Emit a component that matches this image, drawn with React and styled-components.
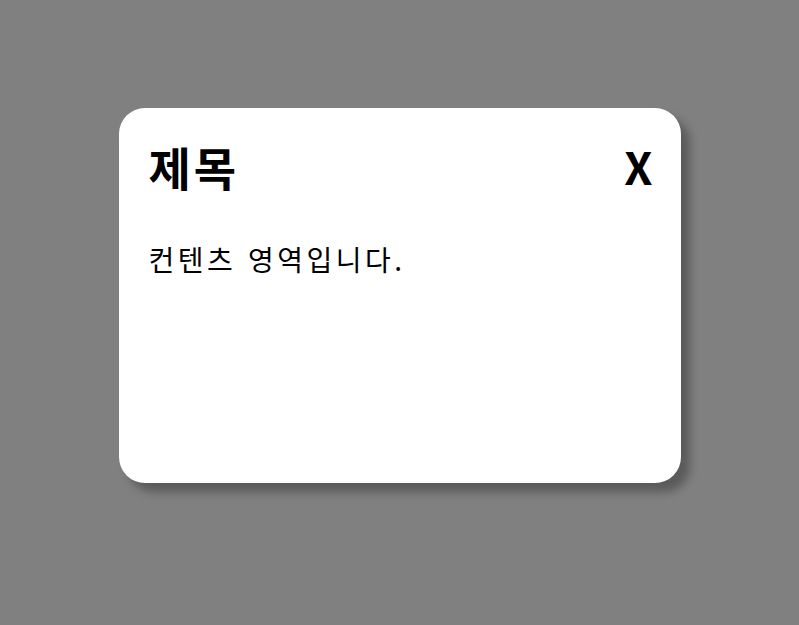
import React from "react";
import styled, {createGlobalStyle} from "styled-components";

const GlobalStyle = createGlobalStyle`
    html, body {
        margin: 0;
        padding: 0;
        width: 100%;
        height: 100%;
        background-color: #808080;
        font-family: "Noto Sans CJK KR", "Noto Sans", sans-serif;
    }
    #root {
        height: 100%;
    }
`;

const Overlay = styled.div`
    width: 100%;
    height: 100%;
    display: flex;
    justify-content: center;
    align-items: flex-start;
    padding-top: 108px;
    box-sizing: border-box;
`;

const ModalBox = styled.div`
    width: 562px;
    height: 375px;
    box-sizing: border-box;
    padding: 29px 28px 30px 30px;
    background-color: #fff;
    border-radius: 26px;
    box-shadow: 9px 9px 10px rgba(0, 0, 0, 0.3);
    display: flex;
    flex-direction: column;
`;

const Header = styled.div`
    display: flex;
    justify-content: space-between;
    align-items: center;
`;

const Title = styled.h2`
    margin: 0;
    font-size: 46px;
    font-weight: bold;
    letter-spacing: 3px;
    line-height: 1.3;
    color: #000;
`;

const CloseButton = styled.button`
    border: none;
    background: none;
    padding: 0;
    margin-top: -2px;
    font-family: inherit;
    font-size: 45px;
    font-weight: bold;
    line-height: 1;
    color: #000;
    cursor: pointer;
`;

const Content = styled.p`
    margin: 43px 0 0;
    font-size: 28px;
    letter-spacing: 3.5px;
    word-spacing: 2px;
    line-height: 1.4;
    color: #000;
`;

const App = () => {
    return (
        <>
            <GlobalStyle />
            <Overlay>
                <ModalBox>
                    <Header>
                        <Title>제목</Title>
                        <CloseButton>X</CloseButton>
                    </Header>
                    <Content>컨텐츠 영역입니다.</Content>
                </ModalBox>
            </Overlay>
        </>
    );
};

export default App;
